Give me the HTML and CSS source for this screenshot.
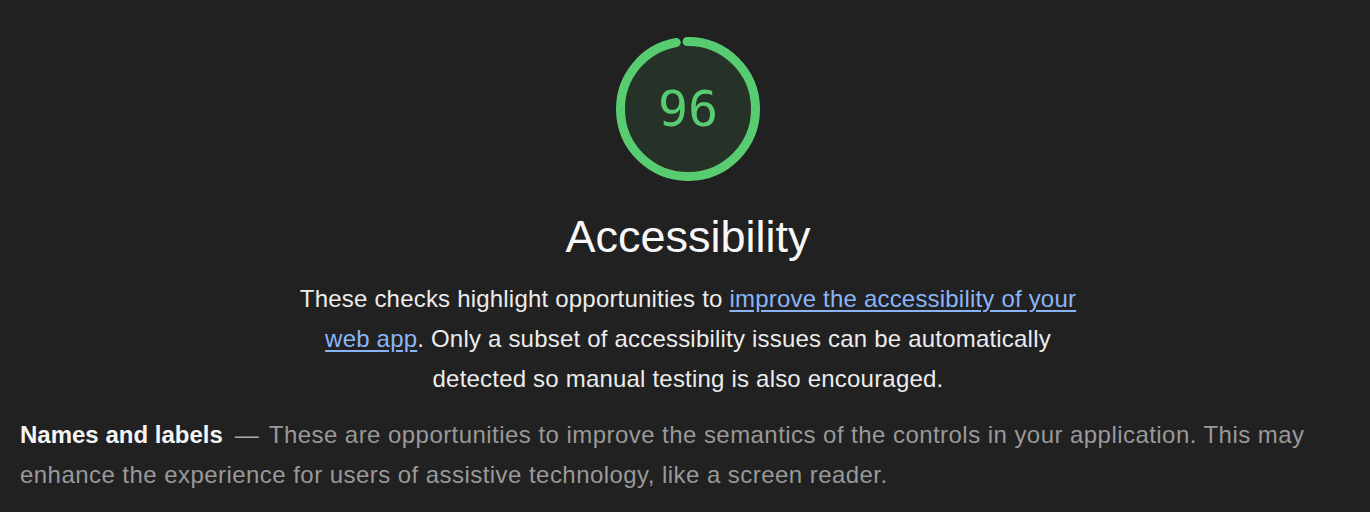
FILE: index.html
```html
<!DOCTYPE html>
<html lang="en">
<head>
<meta charset="utf-8">
<title>Accessibility</title>
<link rel="stylesheet" href="styles.css">
</head>
<body>
<div class="report">
  <section class="category">
    <div class="category-header">
      <div class="gauge">
        <svg class="gauge-svg" width="144" height="144" viewBox="0 0 144 144">
          <circle class="gauge-base" cx="72" cy="72" r="67.5"></circle>
          <circle class="gauge-arc" cx="72" cy="72" r="67.5"></circle>
        </svg>
        <div class="gauge-score">96</div>
      </div>
      <h1 class="category-title">Accessibility</h1>
      <p class="category-description">These checks highlight opportunities to <a href="#">improve the accessibility of your web app</a>. Only a subset of accessibility issues can be automatically detected so manual testing is also encouraged.</p>
    </div>
    <div class="audit-group-header">
      <span class="audit-group-title">Names and labels</span><span class="audit-group-dash">—</span><span class="audit-group-description">These are opportunities to improve the semantics of the controls in your application. This may enhance the experience for users of assistive technology, like a screen reader.</span>
    </div>
  </section>
</div>
</body>
</html>
```

FILE: styles.css
```css
html, body {
  margin: 0;
  padding: 0;
  background: #212121;
}

body {
  font-family: "Liberation Sans", Arial, Helvetica, sans-serif;
  color: #ececec;
}

.report {
  padding: 37px 20px 0 20px;
}

.category-header {
  display: flex;
  flex-direction: column;
  align-items: center;
  text-align: center;
  padding-left: 6px;
}

.gauge {
  position: relative;
  width: 144px;
  height: 144px;
}

.gauge-svg {
  display: block;
}

.gauge-base {
  fill: #263228;
  stroke: none;
}

.gauge-arc {
  fill: none;
  stroke: #58cc70;
  stroke-width: 9;
  stroke-linecap: round;
  stroke-dasharray: 412.5 424.1;
  transform: rotate(-90.8deg);
  transform-origin: 72px 72px;
}

.gauge-score {
  position: absolute;
  inset: 0;
  display: flex;
  align-items: center;
  justify-content: center;
  font-family: "DejaVu Sans Mono", monospace;
  font-size: 50px;
  color: #58cc70;
  padding-bottom: 1px;
}

.category-title {
  margin: 30px 0 0 0;
  font-size: 45px;
  line-height: 52px;
  font-weight: normal;
  color: #f7f7f7;
}

.category-description {
  margin: 16px 0 0 0;
  max-width: 800px;
  font-size: 24px;
  line-height: 40px;
  letter-spacing: 0.2px;
  color: #ececec;
}

.category-description a {
  color: #8ab4f8;
  text-decoration: underline;
  text-underline-offset: 3px;
}

.audit-group-header {
  margin-top: 16px;
  font-size: 24px;
  line-height: 40px;
}

.audit-group-title {
  font-weight: bold;
  color: #f5f5f5;
}

.audit-group-dash {
  color: #a8a8a8;
  margin: 0 10px 0 12px;
}

.audit-group-description {
  color: #999999;
  letter-spacing: 0.45px;
}
```
